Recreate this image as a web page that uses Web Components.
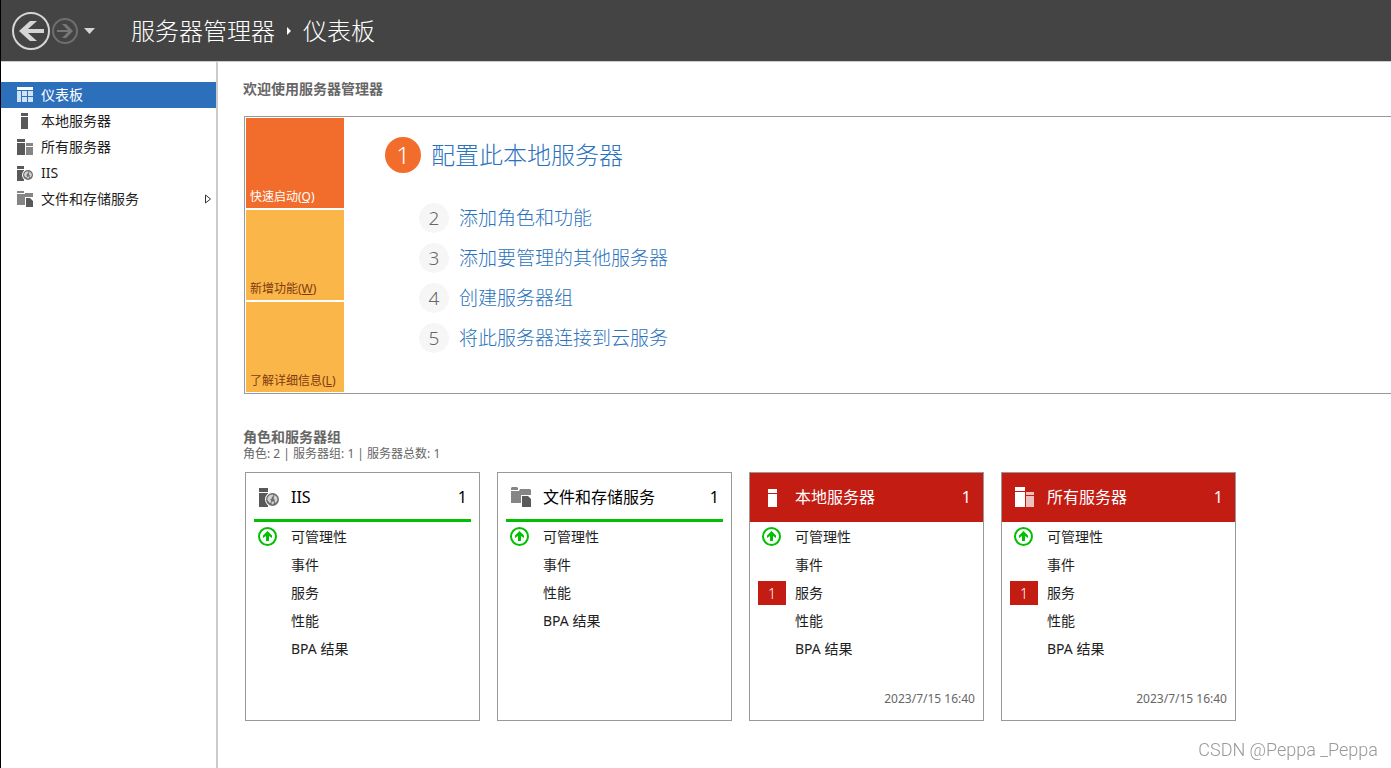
<!DOCTYPE html>
<html lang="zh-CN">
<head>
<meta charset="utf-8">
<title>服务器管理器</title>
<style>
  html, body { height: 100%; }
  body {
    margin: 0;
    background: #fff;
    font-family: "Noto Sans", "Noto Sans CJK SC", sans-serif;
    font-size: 14px;
    color: #1e1e1e;
  }
</style>
</head>
<body>
<server-manager></server-manager>
<script>
const define = (name, html, setup) => {
  const template = document.createElement('template');
  template.innerHTML = html;
  customElements.define(name, class extends HTMLElement {
    constructor() {
      super();
      this.attachShadow({ mode: 'open' }).append(template.content.cloneNode(true));
    }
    connectedCallback() {
      if (setup) setup(this, this.shadowRoot);
    }
  });
};

const globe = (cx, cy, r) => `
  <circle cx="${cx}" cy="${cy}" r="${r + 1}" fill="#fff"/>
  <circle cx="${cx}" cy="${cy}" r="${r}" fill="#6e6e6e"/>
  <g transform="translate(${cx} ${cy}) scale(${r / 6.5})" fill="#d4d4d4">
    <path d="M-5-1.400-3.400-4 0-5 1.200-3.600-.8-2.600-.6-1-2.400-.2-1.200 1.600-2 3.600-3.200 3-5 .4z"/>
    <path d="M2-4.400 4.400-2.400 5 .4 3.400 3.400 2 2.200 2.400.4 1-1 1.600-2.600z"/>
    <path d="M-.8 2.400 1 1.800 1.600 3.400.2 5-1 4.400z"/>
  </g>`;

const icons = {
  dashboard: [16, `<path fill="#fff" d="M0 0h16v3H0z"/><path fill="#cfe3f5" d="M0 4h4v11H0zM5 4h5v5H5zM11 4h5v5h-5zM5 10h5v5H5zM11 10h5v5h-5z"/>`],
  server: [16, `<path fill="#595959" d="M4 0h7v3H4zM4 4h7v12H4z"/>`],
  servers: [16, `<path fill="#595959" d="M0 0h8v3H0zM0 4h8v12H0z"/><path fill="#858585" d="M9 4h7v3H9zM9 8h7v8H9z"/>`],
  iis: [16, `<path fill="#595959" d="M0 1h7v3H0zM0 5h7v11H0z"/>${globe(11, 10, 5)}`],
  files: [16, `<path fill="#858585" d="M0 0h7v2H0zM0 3h8V2h8v12H0z"/><path fill="#fff" d="M8 6h8v10H8z"/><path fill="#595959" d="M9 7h4l3 3v6H9z"/>`],
  'server-lg': [20, `<path fill="#fff" d="M5 2h9v4H5zM5 7h9v13H5z"/>`],
  'servers-lg': [20, `<path fill="#fff" d="M0 0h10v4H0zM0 5h10v15H0z"/><path fill="#eec1be" d="M11 5h8v3h-8zM11 9h8v11h-8z"/>`],
  'iis-lg': [20, `<path fill="#595959" d="M0 1h9v4H0zM0 6h9v14H0z"/>${globe(13.5, 12.5, 6.5)}`],
  'files-lg': [20, `<path fill="#858585" d="M0 1l1-1h5l1 1v2H0zM0 4h8l1-2h10l1 1v13H0z"/><path fill="#fff" d="M10 8h10v12H10z"/><path fill="#595959" d="M11 9h6l3 3v8h-9z"/>`],
};

define('sm-icon', `
  <style>:host { display: block; flex: none; } svg { display: block; }</style>
  <svg aria-hidden="true"></svg>
`, (host, root) => {
  const icon = icons[host.getAttribute('name')];
  if (!icon) return;
  const [size, body] = icon;
  const svg = root.querySelector('svg');
  svg.setAttribute('width', size);
  svg.setAttribute('height', size);
  svg.setAttribute('viewBox', `0 0 ${size} ${size}`);
  svg.innerHTML = body;
});

const placeIcon = (host, root) => {
  const icon = document.createElement('sm-icon');
  icon.setAttribute('name', host.getAttribute('icon'));
  root.querySelector('.icon').replaceChildren(icon);
};

define('app-header', `
  <style>
    :host { display: flex; align-items: center; height: 62px; padding-left: 10px; background: #444; color: #fff; border-bottom: 1px solid #ccc; box-sizing: border-box; flex: none; }
    button { flex: none; display: block; padding: 0; border: 0; background: none; }
    svg { display: block; }
    h1 { display: flex; align-items: center; margin: 0 0 0 34px; font-size: 24px; line-height: 32px; font-weight: 300; white-space: nowrap; }
    h1 svg { margin: 0 11px; }
  </style>
  <button type="button" aria-label="后退"><svg width="40" height="40" viewBox="0 0 40 40"><circle cx="20" cy="20" r="18" fill="none" stroke="#d3d6d3" stroke-width="2"/><path fill="#d3d6d3" d="M8 20 19 10h7l-9 8h16v4H17l9 8h-7z"/></svg></button>
  <button type="button" aria-label="前进" disabled><svg width="28" height="28" viewBox="0 0 28 28"><circle cx="14" cy="14" r="12" fill="none" stroke="#6f6f6f" stroke-width="2"/><path fill="#777" d="M22 14l-7 7h-4l6-6H6v-2h11l-6-6h4z"/></svg></button>
  <button type="button" aria-label="历史记录"><svg width="18" height="10" viewBox="0 0 18 10"><path fill="#d3d6d3" d="M5 2h11l-5.500 6z"/></svg></button>
  <h1><slot></slot><svg width="6" height="8" viewBox="0 0 6 8" aria-hidden="true"><path fill="#fff" d="M1 0l4 4-4 4z"/></svg><slot name="page"></slot></h1>
`);

define('nav-item', `
  <style>
    :host { display: block; }
    a { display: flex; align-items: center; height: 26px; padding: 0 4px 0 16px; gap: 8px; color: inherit; text-decoration: none; line-height: 20px; white-space: nowrap; }
    :host([current]) a { background: #2c6fbb; color: #fff; }
    .more { display: none; margin-left: auto; }
    :host([expandable]) .more { display: block; }
  </style>
  <a href="#"><span class="icon"></span><slot></slot><svg class="more" width="8" height="10" viewBox="0 0 8 10" aria-hidden="true"><path fill="none" stroke="#333" d="M1.500 1v8L6.500 5z"/></svg></a>
`, placeIcon);

define('side-nav', `
  <style>
    :host { display: block; flex: none; width: 215px; padding-top: 20px; border-right: 2px solid #ccc; }
  </style>
  <nav><slot></slot></nav>
`);

define('quick-tab', `
  <style>
    :host { display: block; }
    button { display: flex; align-items: flex-end; width: 98px; height: 90px; padding: 0 4px 2px; border: 0; background: #fab648; color: #7f3a10; font: inherit; font-size: 12px; line-height: 18px; white-space: nowrap; }
    :host([selected]) button { background: #f26c2b; color: #fff; }
  </style>
  <button type="button"><span><slot></slot></span></button>
`);

define('setup-step', `
  <style>
    :host { display: flex; align-items: center; height: 40px; gap: 10px; padding-left: 34px; font-size: 19px; line-height: 28px; font-weight: 300; }
    span { display: flex; align-items: center; justify-content: center; width: 30px; height: 30px; border-radius: 50%; background: #f6f6f6; color: #666; }
    a { color: #2a72bd; text-decoration: none; white-space: nowrap; }
    :host([primary]) { height: 36px; padding-left: 0; margin-bottom: 25px; font-size: 24px; line-height: 36px; }
    :host([primary]) span { width: 36px; height: 36px; background: #f26c2b; color: #fff; }
  </style>
  <span></span><a href="#"><slot></slot></a>
`, (host, root) => {
  root.querySelector('span').textContent = host.getAttribute('number');
});

define('welcome-panel', `
  <style>
    :host { display: flex; margin-left: 1px; border: 1px solid #999; border-right: 0; padding: 1px; }
    .tabs { display: grid; gap: 2px; }
    .steps { padding: 19px 0 0 41px; }
  </style>
  <div class="tabs"><slot name="tab"></slot></div>
  <div class="steps"><slot></slot></div>
`);

define('status-row', `
  <style>
    :host { display: flex; align-items: center; height: 28px; }
    .mark { display: flex; align-items: center; justify-content: center; width: 28px; height: 24px; margin-right: 9px; font-size: 14px; font-weight: 300; color: #fff; }
    .alert { background: #c31c12; }
    a { color: inherit; text-decoration: none; line-height: 20px; }
  </style>
  <span class="mark"></span><a href="#"><slot></slot></a>
`, (host, root) => {
  const mark = root.querySelector('.mark');
  if (host.hasAttribute('ok')) {
    mark.innerHTML = '<svg width="20" height="20" viewBox="0 0 20 20" aria-hidden="true"><circle cx="9.500" cy="9.500" r="8.500" fill="none" stroke="#00c000" stroke-width="2"/><path fill="#00c000" d="M9.500 4l4.500 4.500v2.500l-3-2v5H8V9l-3 2V8.500z"/></svg>';
  }
  if (host.hasAttribute('alerts')) {
    mark.textContent = host.getAttribute('alerts');
    mark.classList.add('alert');
  }
});

define('role-card', `
  <style>
    :host { display: flex; flex-direction: column; box-sizing: border-box; width: 235px; min-height: 249px; border: 1px solid #999; }
    header { display: flex; align-items: center; box-sizing: border-box; height: 49px; margin: 0 8px; padding: 2px 0 0 5px; border-bottom: 3px solid #00c000; color: #000; }
    h3 { flex: 1; margin: 0 0 0 12px; font-size: 16px; line-height: 24px; font-weight: 400; }
    output { margin-right: 4px; font-size: 16px; line-height: 24px; }
    :host([alert]) header { margin: 0; padding: 2px 8px 0 13px; background: #c31c12; border-color: #c31c12; color: #fff; }
    .rows { padding: 1px 8px 0; }
    footer { margin-top: auto; padding: 0 8px 12px; font-size: 12px; line-height: 18px; color: #666; text-align: right; }
  </style>
  <header><span class="icon"></span><h3></h3><output>1</output></header>
  <div class="rows"><slot></slot></div>
  <footer><slot name="time"></slot></footer>
`, (host, root) => {
  placeIcon(host, root);
  root.querySelector('h3').textContent = host.getAttribute('heading');
});

define('water-mark', `
  <style>
    :host { position: fixed; right: 13px; bottom: 6px; font: 18px/24px Roboto, sans-serif; font-weight: 300; color: #999; }
  </style>
  <slot></slot>
`);

define('server-manager', `
  <style>
    :host { display: flex; flex-direction: column; min-height: 100%; box-sizing: border-box; border-left: 1px solid #000; }
    .body { display: flex; flex: 1; }
    main { flex: 1; min-width: 0; padding: 17px 0 0 25px; }
    h2 { margin: 0; font-size: 14px; line-height: 20px; font-weight: 700; color: #666; }
    welcome-panel { margin-top: 17px; margin-bottom: 33px; }
    p { margin: 0; font-size: 12px; line-height: 14px; color: #666; }
    .cards { display: flex; flex-wrap: wrap; gap: 17px; margin: 11px 0 0 2px; }
  </style>
  <app-header>服务器管理器<span slot="page">仪表板</span></app-header>
  <div class="body">
    <side-nav>
      <nav-item icon="dashboard" current>仪表板</nav-item>
      <nav-item icon="server">本地服务器</nav-item>
      <nav-item icon="servers">所有服务器</nav-item>
      <nav-item icon="iis">IIS</nav-item>
      <nav-item icon="files" expandable>文件和存储服务</nav-item>
    </side-nav>
    <main>
      <h2>欢迎使用服务器管理器</h2>
      <welcome-panel>
        <quick-tab slot="tab" selected>快速启动(<u>Q</u>)</quick-tab>
        <quick-tab slot="tab">新增功能(<u>W</u>)</quick-tab>
        <quick-tab slot="tab">了解详细信息(<u>L</u>)</quick-tab>
        <setup-step number="1" primary>配置此本地服务器</setup-step>
        <setup-step number="2">添加角色和功能</setup-step>
        <setup-step number="3">添加要管理的其他服务器</setup-step>
        <setup-step number="4">创建服务器组</setup-step>
        <setup-step number="5">将此服务器连接到云服务</setup-step>
      </welcome-panel>
      <h2>角色和服务器组</h2>
      <p>角色: 2 | 服务器组: 1 | 服务器总数: 1</p>
      <div class="cards">
        <role-card icon="iis-lg" heading="IIS">
          <status-row ok>可管理性</status-row>
          <status-row>事件</status-row>
          <status-row>服务</status-row>
          <status-row>性能</status-row>
          <status-row>BPA 结果</status-row>
        </role-card>
        <role-card icon="files-lg" heading="文件和存储服务">
          <status-row ok>可管理性</status-row>
          <status-row>事件</status-row>
          <status-row>性能</status-row>
          <status-row>BPA 结果</status-row>
        </role-card>
        <role-card icon="server-lg" heading="本地服务器" alert>
          <status-row ok>可管理性</status-row>
          <status-row>事件</status-row>
          <status-row alerts="1">服务</status-row>
          <status-row>性能</status-row>
          <status-row>BPA 结果</status-row>
          <time slot="time">2023/7/15 16:40</time>
        </role-card>
        <role-card icon="servers-lg" heading="所有服务器" alert>
          <status-row ok>可管理性</status-row>
          <status-row>事件</status-row>
          <status-row alerts="1">服务</status-row>
          <status-row>性能</status-row>
          <status-row>BPA 结果</status-row>
          <time slot="time">2023/7/15 16:40</time>
        </role-card>
      </div>
    </main>
  </div>
  <water-mark>CSDN @Peppa _Peppa</water-mark>
`);
</script>
</body>
</html>
